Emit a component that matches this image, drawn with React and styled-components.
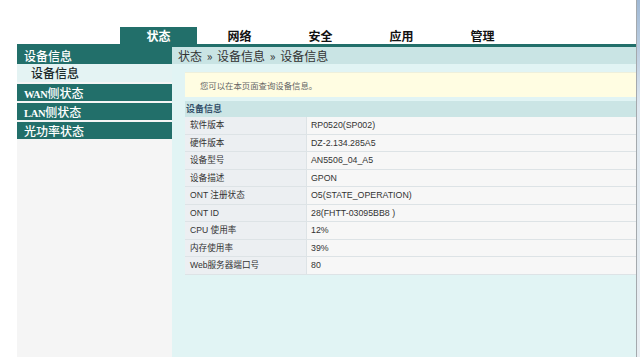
import React from 'react';
import styled, { createGlobalStyle } from 'styled-components';

const TEAL = '#226f6a';

const GlobalStyle = createGlobalStyle`
  html, body {
    margin: 0;
    padding: 0;
    background: #fff;
  }
  body {
    font-family: "Liberation Sans", "Noto Sans CJK SC", sans-serif;
    width: 640px;
    height: 357px;
    overflow: hidden;
  }
`;

const Page = styled.div`
  display: flex;
  width: 640px;
  height: 357px;
`;

const Frame = styled.div`
  width: 636px;
  display: flex;
  flex-direction: column;
`;

const ScrollStrip = styled.div`
  width: 3px;
  border-left: 1px solid #a4a9ad;
  background: linear-gradient(#9fb8d4, #dfe8f0 30%, #e9eef2);
`;

const TabBar = styled.div`
  display: flex;
  gap: 4px;
  height: 17px;
  margin-top: 27px;
  padding-left: 120px;
`;

const Tab = styled.div`
  width: 77px;
  height: 17px;
  line-height: 17px;
  text-align: center;
  font-family: "Noto Sans CJK SC", sans-serif;
  font-weight: 700;
  font-size: 12px;
  color: ${p => (p.$active ? '#fff' : '#111')};
  background: ${p => (p.$active ? TEAL : 'transparent')};
`;

const Rule = styled.div`
  height: 3px;
  margin-left: 17px;
  background: ${TEAL};
`;

const Body = styled.div`
  flex: 1;
  display: flex;
  margin-left: 17px;
`;

const Sidebar = styled.div`
  width: 155px;
  background: #f5f5f5;
  display: flex;
  flex-direction: column;
`;

const MenuItem = styled.div`
  height: ${p => (p.$sub ? 18 : 17)}px;
  line-height: ${p => (p.$sub ? 18 : 17)}px;
  margin-bottom: ${p => (p.$gap ? 2 : 0)}px;
  padding-left: ${p => (p.$sub ? 14 : 7)}px;
  font-family: "Noto Sans CJK SC", serif;
  font-size: 12px;
  font-weight: 500;
  color: ${p => (p.$sub ? '#1c2b2b' : '#fff')};
  background: ${p => (p.$sub ? '#e4f3f3' : TEAL)};
`;

const Latin = styled.span`
  font-family: "Liberation Serif", serif;
  font-weight: 700;
  font-size: 10.5px;
  letter-spacing: -0.3px;
`;

const Main = styled.div`
  flex: 1;
  background: #e1f4f4;
  display: flex;
  flex-direction: column;
`;

const Crumb = styled.div`
  height: 17px;
  line-height: 17px;
  padding-left: 6px;
  background: #c9e4e4;
  font-family: "Noto Sans CJK SC", sans-serif;
  font-size: 12px;
  color: #333;
  word-spacing: 2px;
`;

const Content = styled.div`
  padding: 8px 0 0 13px;
  display: flex;
  flex-direction: column;
`;

const Notice = styled.div`
  height: 24px;
  line-height: 24px;
  padding-left: 15px;
  background: #fffde2;
  border-top: 1px solid #eef0dc;
  font-family: "Noto Sans CJK SC", sans-serif;
  font-size: 8.4px;
  color: #666;
`;

const SectionTitle = styled.div`
  margin-top: 4px;
  height: 16px;
  line-height: 16px;
  padding-left: 1px;
  background: #cbe5e5;
  font-family: "Noto Sans CJK SC", sans-serif;
  font-weight: 700;
  font-size: 9px;
  color: #34506a;
`;

const Table = styled.div`
  display: flex;
  flex-direction: column;
`;

const Row = styled.div`
  display: flex;
  height: 16.5px;
  border-bottom: 1px solid #dde3e6;
`;

const Label = styled.div`
  width: 116px;
  padding-left: 5px;
  line-height: 16.5px;
  background: #eceff2;
  border-right: 1px solid #dde3e6;
  font-family: "Liberation Sans", "Noto Sans CJK SC", sans-serif;
  font-size: 8.6px;
  color: #333;
`;

const Value = styled.div`
  flex: 1;
  padding-left: 4px;
  line-height: 16.5px;
  background: #f7f7f7;
  font-family: "Liberation Sans", "Noto Sans CJK SC", sans-serif;
  font-size: 8.8px;
  color: #333;
`;

const tabs = ['状态', '网络', '安全', '应用', '管理'];

const rows = [
  ['软件版本', 'RP0520(SP002)'],
  ['硬件版本', 'DZ-2.134.285A5'],
  ['设备型号', 'AN5506_04_A5'],
  ['设备描述', 'GPON'],
  ['ONT 注册状态', 'O5(STATE_OPERATION)'],
  ['ONT ID', '28(FHTT-03095BB8 )'],
  ['CPU 使用率', '12%'],
  ['内存使用率', '39%'],
  ['Web服务器端口号', '80'],
];

export default function App() {
  return (
    <>
      <GlobalStyle />
      <Page>
        <Frame>
          <TabBar>
            {tabs.map((t, i) => (
              <Tab key={t} $active={i === 0}>{t}</Tab>
            ))}
          </TabBar>
          <Rule />
          <Body>
            <Sidebar>
              <MenuItem>设备信息</MenuItem>
              <MenuItem $sub $gap>设备信息</MenuItem>
              <MenuItem $gap><Latin>WAN</Latin>侧状态</MenuItem>
              <MenuItem $gap><Latin>LAN</Latin>侧状态</MenuItem>
              <MenuItem>光功率状态</MenuItem>
            </Sidebar>
            <Main>
              <Crumb>状态 » 设备信息 » 设备信息</Crumb>
              <Content>
                <Notice>您可以在本页面查询设备信息。</Notice>
                <SectionTitle>设备信息</SectionTitle>
                <Table>
                  {rows.map(([k, v]) => (
                    <Row key={k}>
                      <Label>{k}</Label>
                      <Value>{v}</Value>
                    </Row>
                  ))}
                </Table>
              </Content>
            </Main>
          </Body>
        </Frame>
        <ScrollStrip />
      </Page>
    </>
  );
}
